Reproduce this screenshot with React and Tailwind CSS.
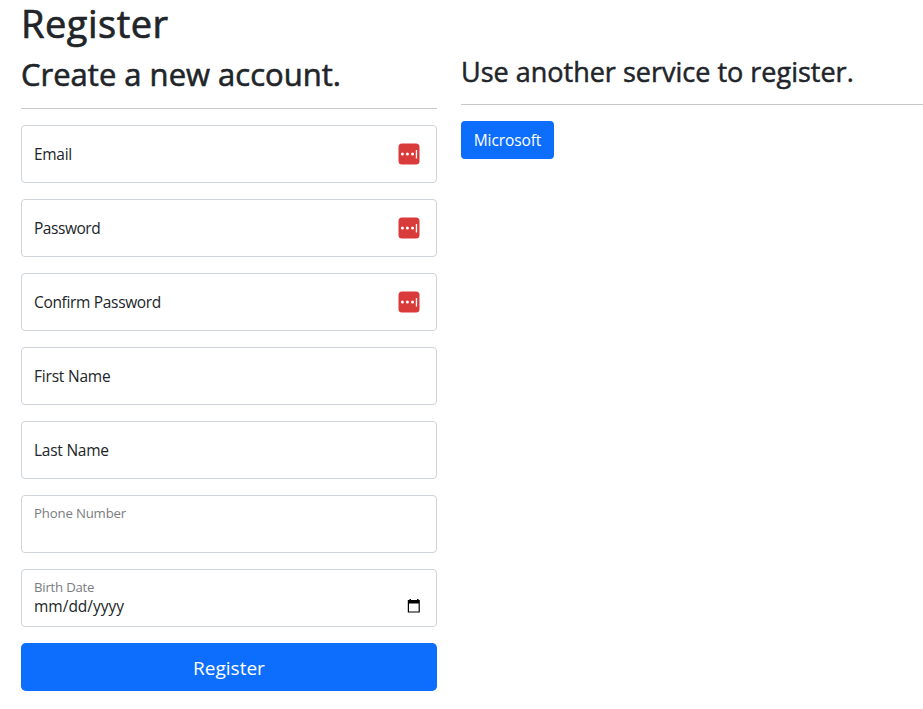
function PasswordManagerIcon() {
  return (
    <svg width="22" height="22" viewBox="0 0 22 22" className="shrink-0" aria-hidden="true">
      <rect x="0.5" y="0.5" width="21" height="21" rx="3.5" fill="#d93a3a" />
      <circle cx="4.4" cy="11" r="1.5" fill="#fff" />
      <circle cx="9.4" cy="11" r="1.5" fill="#fff" />
      <circle cx="14.5" cy="11" r="1.5" fill="#fff" />
      <rect x="17.8" y="7" width="1.3" height="8.5" fill="#fff" />
    </svg>
  );
}

function CalendarIcon() {
  return (
    <svg width="14" height="14" viewBox="0 0 14 14" className="shrink-0" aria-hidden="true">
      <path fillRule="evenodd" fill="#000" d="M2.5 0H4v1h6V0h1.5v1h1.3v12.6H.8V1h1.7zM2 4.5v8h9.6v-8z" />
    </svg>
  );
}

function Field({ label, tracking, secure }) {
  return (
    <label className="flex h-[58px] items-center justify-between rounded border border-[#ced4da] bg-white pr-4 pl-3">
      <span className={`whitespace-nowrap text-[15.5px] leading-6 ${tracking}`}>{label}</span>
      {secure && <PasswordManagerIcon />}
    </label>
  );
}

export default function App() {
  return (
    <main className="min-h-[709px] overflow-x-hidden bg-white pl-[21px] font-['Open_Sans','Noto_Sans',sans-serif] text-[#212529]">
      <h1 className="h-[48px] text-[38px] leading-[46px] font-medium tracking-[0.5px] [-webkit-text-stroke:0.7px_#212529]">Register</h1>
      <div className="flex gap-6">
        <section className="w-[416px] shrink-0 pt-2">
          <h2 className="h-[38px] whitespace-nowrap text-[31px] leading-[36px] font-medium [-webkit-text-stroke:0.6px_#212529]">Create a new account.</h2>
          <hr className="mt-[14px] mb-4 border-[#c8c9ca]" />
          <form className="flex flex-col gap-4">
            <Field label="Email" tracking="tracking-[-0.3px]" secure />
            <Field label="Password" tracking="tracking-[-0.45px]" secure />
            <Field label="Confirm Password" tracking="tracking-[-0.33px]" secure />
            <Field label="First Name" tracking="tracking-[-0.2px]" />
            <Field label="Last Name" tracking="tracking-[-0.25px]" />
            <div className="h-[58px] rounded border border-[#ced4da] pt-[7px] pl-3 text-[13.2px] leading-5 tracking-[-0.16px] text-[#7a7c7f]">
              Phone Number
            </div>
            <div className="h-[58px] rounded border border-[#ced4da] pt-[7px] pr-[15px] pl-3">
              <div className="text-[13.2px] leading-5 tracking-[-0.22px] text-[#7a7c7f]">Birth Date</div>
              <div className="flex h-[18px] items-center justify-between text-[15.5px] leading-[18px]">
                <span>mm/dd/yyyy</span>
                <CalendarIcon />
              </div>
            </div>
            <button type="button" className="h-12 rounded-[4.8px] bg-[#0d6efd] pt-0.5 text-[19px] leading-[30px] text-white">Register</button>
          </form>
        </section>
        <section className="w-[462px] shrink-0 pt-2">
          <h3 className="h-[34px] whitespace-nowrap text-[27px] leading-[32px] font-medium [-webkit-text-stroke:0.5px_#212529]">Use another service to register.</h3>
          <hr className="mt-[14px] mb-4 border-[#c8c9ca]" />
          <button type="button" className="h-[38px] w-[93px] rounded bg-[#0d6efd] text-[15.5px] leading-6 tracking-[-0.1px] text-white">Microsoft</button>
        </section>
      </div>
    </main>
  );
}
